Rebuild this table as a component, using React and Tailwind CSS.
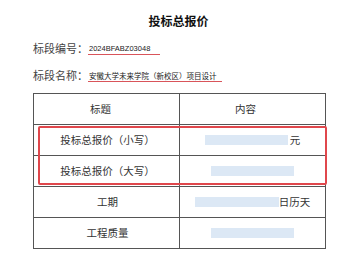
const cjk = { fontFamily: '"Noto Sans CJK SC", "Noto Sans", sans-serif' };
const latin = { fontFamily: '"Liberation Sans", "Noto Sans CJK SC", sans-serif' };

function Blank({ className = "" }) {
  return <span className={"inline-block h-[10px] bg-[#dce8f5] " + className} />;
}

function InfoLine({ label, value, width }) {
  return (
    <div className="flex items-end h-[14px] text-[11px] leading-[14px] text-[#444]" style={cjk}>
      <span>{label}：</span>
      <span
        className={"inline-block border-b border-[#d9545a] text-[7.5px] leading-[10px] text-[#222] pl-[1px] " + width}
        style={value.match(/^[0-9A-Z]+$/) ? latin : cjk}
      >
        {value}
      </span>
    </div>
  );
}

const rows = [
  { title: "投标总报价（小写）", content: <><Blank className="w-[83px]" /><span className="ml-[2px]">元</span></> },
  { title: "投标总报价（大写）", content: <Blank className="w-[83px]" /> },
  { title: "工期", content: <><Blank className="w-[84px]" /><span>日历天</span></> },
  { title: "工程质量", content: <Blank className="w-[83px]" /> },
];

export default function App() {
  return (
    <div className="w-[350px] h-[254px] bg-white overflow-hidden" style={cjk}>
      <div className="ml-[33px] w-[292px] flex flex-col">
        <div className="mt-[14px] h-[14px] leading-[14px] text-center text-[12px] font-bold text-[#111] pr-[1px]">
          投标总报价
        </div>

        <div className="mt-[13px]">
          <InfoLine label="标段编号" value="2024BFABZ03048" width="w-[72px]" />
        </div>
        <div className="mt-[13px]">
          <InfoLine label="标段名称" value="安徽大学未来学院（新校区）项目设计" width="w-[134px]" />
        </div>

        <div className="relative mt-[11px]">
          <table className="w-[292px] border-collapse border border-[#444] text-[10.5px] text-[#333] table-fixed">
            <colgroup>
              <col className="w-[146px]" />
              <col className="w-[146px]" />
            </colgroup>
            <tbody>
              <tr className="h-[31px]">
                <td className="border border-[#555] text-center pr-[12px]">标题</td>
                <td className="border border-[#555] text-center pr-[14px]">内容</td>
              </tr>
              {rows.map((r) => (
                <tr key={r.title} className="h-[31px]">
                  <td className="border border-[#555] text-center pl-[2px]">{r.title}</td>
                  <td className="border border-[#555]">
                    <div className="flex items-center justify-center">{r.content}</div>
                  </td>
                </tr>
              ))}
            </tbody>
          </table>
          {/* highlight around the two price rows */}
          <div className="absolute left-[5px] top-[33px] w-[289px] h-[59px] border-2 border-[#e0474c] rounded-[2px] pointer-events-none" />
        </div>
      </div>
    </div>
  );
}
